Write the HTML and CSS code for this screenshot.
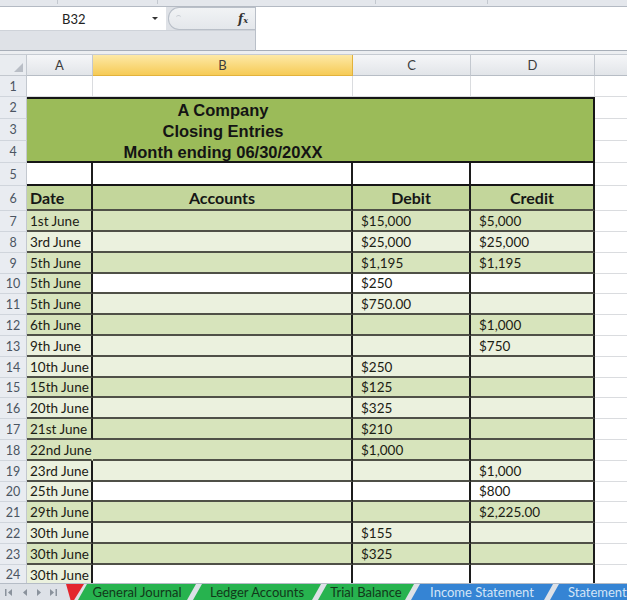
FILE: index.html
```html
<!DOCTYPE html>
<html>
<head>
<meta charset="utf-8">
<link rel="stylesheet" href="styles.css">
</head>
<body>
<div class="app">
  <div class="ribbon-edge">
    <span class="rs rs1"></span><span class="rs rs2"></span><span class="rs rs3"></span><span class="rs rs4"></span>
  </div>
  <div class="fbar">
    <div class="fbar-left">
      <div class="fbar-top">
        <div class="namebox"><span class="nb-text">B32</span><span class="nb-arrow"></span></div>
        <div class="fx-pill"><span class="fx-dot"></span><span class="fx">f<span class="fx-sub">x</span></span></div>
      </div>
      <div class="fbar-bottom"></div>
    </div>
    <div class="fbar-input"></div>
  </div>
  <div class="sep"></div>

  <div class="sheet">
    <div class="row colhdr">
      <div class="corner"><svg width="9" height="9" viewBox="0 0 9 9"><polygon points="9,0 9,9 0,9" fill="#b9bec6"/></svg></div>
      <div class="ch">A</div>
      <div class="ch sel">B</div>
      <div class="ch">C</div>
      <div class="ch">D</div>
      <div class="ch last"></div>
    </div>

    <div class="row r1">
      <div class="rh">1</div>
      <div class="c"></div><div class="c"></div><div class="c"></div><div class="c"></div><div class="c e"></div>
    </div>

    <div class="title-block">
      <div class="rh t1">2</div>
      <div class="rh t2">3</div>
      <div class="rh t3">4</div>
      <div class="tb tb-a"></div>
      <div class="tb tb-b">
        <div class="tline">A Company</div>
        <div class="tline">Closing Entries</div>
        <div class="tline">Month ending 06/30/20XX</div>
      </div>
      <div class="tb tb-cd"></div>
      <div class="c e e1"></div>
      <div class="c e e2"></div>
      <div class="c e e3"></div>
    </div>

    <div class="row r5">
      <div class="rh">5</div>
      <div class="c t"></div><div class="c t"></div><div class="c t"></div><div class="c t"></div><div class="c e"></div>
    </div>

    <div class="row r6">
      <div class="rh">6</div>
      <div class="c t h a">Date</div>
      <div class="c t h ctr">Accounts</div>
      <div class="c t h ctr">Debit</div>
      <div class="c t h ctr">Credit</div>
      <div class="c e"></div>
    </div>

    <div class="row rd"><div class="rh">7</div><div class="c t g a">1st June</div><div class="c t g"></div><div class="c t g n">$15,000</div><div class="c t g n">$5,000</div><div class="c e"></div></div>
    <div class="row rd"><div class="rh">8</div><div class="c t l a">3rd June</div><div class="c t l"></div><div class="c t l n">$25,000</div><div class="c t l n">$25,000</div><div class="c e"></div></div>
    <div class="row rd"><div class="rh">9</div><div class="c t g a">5th June</div><div class="c t g"></div><div class="c t g n">$1,195</div><div class="c t g n">$1,195</div><div class="c e"></div></div>
    <div class="row rd short"><div class="rh">10</div><div class="c t g a">5th June</div><div class="c t w"></div><div class="c t w n">$250</div><div class="c t w n"></div><div class="c e"></div></div>
    <div class="row rd"><div class="rh">11</div><div class="c t g a">5th June</div><div class="c t l"></div><div class="c t l n">$750.00</div><div class="c t l n"></div><div class="c e"></div></div>
    <div class="row rd"><div class="rh">12</div><div class="c t g a">6th June</div><div class="c t g"></div><div class="c t g n"></div><div class="c t g n">$1,000</div><div class="c e"></div></div>
    <div class="row rd"><div class="rh">13</div><div class="c t l a">9th June</div><div class="c t l"></div><div class="c t l n"></div><div class="c t l n">$750</div><div class="c e"></div></div>
    <div class="row rd"><div class="rh">14</div><div class="c t l a">10th June</div><div class="c t l"></div><div class="c t l n">$250</div><div class="c t l n"></div><div class="c e"></div></div>
    <div class="row rd short"><div class="rh">15</div><div class="c t g a">15th June</div><div class="c t g"></div><div class="c t g n">$125</div><div class="c t g n"></div><div class="c e"></div></div>
    <div class="row rd"><div class="rh">16</div><div class="c t l a">20th June</div><div class="c t l"></div><div class="c t l n">$325</div><div class="c t l n"></div><div class="c e"></div></div>
    <div class="row rd"><div class="rh">17</div><div class="c t g a">21st June</div><div class="c t g"></div><div class="c t g n">$210</div><div class="c t g n"></div><div class="c e"></div></div>
    <div class="row rd"><div class="rh">18</div><div class="c t g a open">22nd June</div><div class="c t g"></div><div class="c t g n">$1,000</div><div class="c t g n"></div><div class="c e"></div></div>
    <div class="row rd"><div class="rh">19</div><div class="c t l a">23rd June</div><div class="c t l"></div><div class="c t l n"></div><div class="c t l n">$1,000</div><div class="c e"></div></div>
    <div class="row rd short"><div class="rh">20</div><div class="c t l a">25th June</div><div class="c t w"></div><div class="c t w n"></div><div class="c t w n">$800</div><div class="c e"></div></div>
    <div class="row rd"><div class="rh">21</div><div class="c t g a">29th June</div><div class="c t g"></div><div class="c t g n"></div><div class="c t g n">$2,225.00</div><div class="c e"></div></div>
    <div class="row rd"><div class="rh">22</div><div class="c t l a">30th June</div><div class="c t l"></div><div class="c t l n">$155</div><div class="c t l n"></div><div class="c e"></div></div>
    <div class="row rd"><div class="rh">23</div><div class="c t g a">30th June</div><div class="c t g"></div><div class="c t g n">$325</div><div class="c t g n"></div><div class="c e"></div></div>
    <div class="row rd last-row"><div class="rh">24</div><div class="c t l a">30th June</div><div class="c t w"></div><div class="c t w n"></div><div class="c t w n"></div><div class="c e"></div></div>
  </div>

  <div class="tabs">
    <div class="nav">
      <svg width="60" height="17" viewBox="0 0 60 17">
        <rect x="5" y="5" width="1.5" height="7" fill="#8a929c"/>
        <polygon points="12,5 12,12 8,8.5" fill="#8a929c"/>
        <polygon points="27,5 27,12 23,8.5" fill="#8a929c"/>
        <polygon points="37,5 37,12 41,8.5" fill="#8a929c"/>
        <polygon points="50,5 50,12 54,8.5" fill="#8a929c"/>
        <rect x="55.5" y="5" width="1.5" height="7" fill="#8a929c"/>
      </svg>
    </div>
    <div class="tab red"></div>
    <div class="tab green t-gj">General Journal</div>
    <div class="tab green t-la">Ledger Accounts</div>
    <div class="tab green t-tb">Trial Balance</div>
    <div class="tab blue t-is">Income Statement</div>
    <div class="tab blue t-st">Statement</div>
  </div>
</div>
</body>
</html>
```

FILE: styles.css
```css
* { box-sizing: border-box; }
html, body { margin: 0; padding: 0; }
body {
  width: 627px;
  height: 600px;
  overflow: hidden;
  background: #ffffff;
  font-family: "Lato", "Liberation Sans", sans-serif;
  color: #222;
}
.app {
  display: flex;
  flex-direction: column;
  height: 600px;
}

/* ribbon edge */
.ribbon-edge {
  position: relative;
  height: 7px;
  background: #e4e7ec;
  border-bottom: 1px solid #b4bac3;
  flex: none;
}
.rs {
  position: absolute;
  top: 0;
  width: 1px;
  height: 4px;
  background: #c3c8cf;
}
.rs1 { left: 57px; }
.rs2 { left: 157px; }
.rs3 { left: 375px; }
.rs4 { left: 487px; }

/* formula bar */
.fbar {
  display: flex;
  height: 44px;
  flex: none;
}
.fbar-left {
  width: 255px;
  display: flex;
  flex-direction: column;
}
.fbar-top {
  display: flex;
  height: 23px;
  background: #dfe2e7;
}
.namebox {
  width: 166px;
  background: #fff;
  display: flex;
  align-items: center;
  position: relative;
}
.nb-text {
  font-family: "Lato", sans-serif;
  font-size: 13px;
  color: #222;
  margin-left: 62px;
}
.nb-arrow {
  position: absolute;
  left: 152px;
  top: 10px;
  width: 0;
  height: 0;
  border-left: 3px solid transparent;
  border-right: 3px solid transparent;
  border-top: 3px solid #333;
}
.fx-pill {
  flex: 1;
  margin-left: 2px;
  background: linear-gradient(#f1f3f5, #e4e7eb);
  border: 1px solid #b9bfc8;
  border-right: none;
  border-radius: 11px 0 0 11px;
  display: flex;
  align-items: center;
  justify-content: space-between;
  padding: 0 7px 0 7px;
}
.fx-dot {
  width: 5px;
  height: 3px;
  border-top: 1px solid #c9cdd3;
  border-radius: 3px 3px 0 0;
  margin-top: -4px;
}
.fx {
  font-family: "DejaVu Serif", "Liberation Serif", serif;
  font-style: italic;
  font-weight: bold;
  font-size: 12px;
  color: #333;
}
.fx-sub { font-size: 8px; }
.fbar-bottom {
  flex: 1;
  background: #dfe2e7;
  border-top: 1px solid #cfd3d9;
  border-bottom: 1px solid #a7aeb8;
}
.fbar-input {
  flex: 1;
  background: #fff;
  border-left: 1px solid #b9bfc8;
  border-bottom: 1px solid #a7aeb8;
}
.sep {
  height: 4px;
  flex: none;
  background: #eceef1;
  border-bottom: 1px solid #c6cbd2;
}

/* sheet */
.sheet {
  flex: 1;
  overflow: hidden;
}
.row {
  display: grid;
  grid-template-columns: 27px 66px 260px 118px 124px 32px;
}
.colhdr { height: 21px; }
.corner {
  background: #e9ecf0;
  border-right: 1px solid #c3c8cf;
  border-bottom: 1px solid #c3c8cf;
  display: flex;
  align-items: flex-end;
  justify-content: flex-end;
  padding: 0 3px 3px 0;
}
.ch {
  background: linear-gradient(#f5f6f8, #e2e5e9);
  border-right: 1px solid #c3c8cf;
  border-bottom: 1px solid #b7bdc5;
  font-size: 13px;
  color: #3d3d3d;
  display: flex;
  align-items: center;
  justify-content: center;
}
.ch.sel {
  background: linear-gradient(#fde9a6, #f6cb56);
  border-right: 1px solid #e2b23c;
  border-bottom: 1px solid #e2b23c;
}
.ch.last { border-right: none; }

.rh {
  background: #e9ecf1;
  border-right: 1px solid #c3c8cf;
  border-bottom: 1px solid #d0d5dc;
  font-size: 12.5px;
  color: #4b5562;
  display: flex;
  align-items: center;
  justify-content: center;
}

.c {
  border-right: 1px solid #dadcdf;
  border-bottom: 1px solid #dadcdf;
  font-size: 13.5px;
  display: flex;
  align-items: center;
  white-space: nowrap;
}
.c.e { border-right: none; }

.r1 { height: 21px; }
.r5 { height: 23px; }
.r6 { height: 25px; }
.rd { height: 21px; }
.rd.short { height: 20px; }
.last-row .c, .last-row .rh { align-items: flex-start; padding-top: 2px; }

/* title block */
.title-block {
  display: grid;
  grid-template-columns: 27px 66px 260px 242px 32px;
  grid-template-rows: 22px 22px 22px;
  height: 66px;
}
.t1 { grid-column: 1; grid-row: 1; }
.t2 { grid-column: 1; grid-row: 2; }
.t3 { grid-column: 1; grid-row: 3; }
.tb {
  grid-row: 1 / 4;
  background: #9bbb59;
  border-top: 2px solid #161616;
  border-bottom: 2px solid #161616;
}
.tb-a { grid-column: 2; }
.tb-b {
  grid-column: 3;
  display: flex;
  flex-direction: column;
  align-items: center;
  justify-content: center;
  font-family: "Liberation Sans", Arial, sans-serif;
  font-weight: bold;
  font-size: 16.5px;
  color: #141414;
}
.tline {
  height: 21px;
  line-height: 22px;
  white-space: nowrap;
}
.tb-cd {
  grid-column: 4;
  border-right: 2px solid #161616;
}
.e1 { grid-column: 5; grid-row: 1; }
.e2 { grid-column: 5; grid-row: 2; }
.e3 { grid-column: 5; grid-row: 3; }

/* table cells */
.c.t {
  border-right: 2px solid #1c1c1c;
  border-bottom: 2px solid #4f5047;
}
.r5 .c.t {
  border-bottom: 2px solid #161616;
  background: #fff;
}
.c.h {
  background: #c3d69b;
  font-weight: bold;
  font-size: 16px;
  color: #161616;
}
.ctr { justify-content: center; }
.c.a { padding-left: 3px; }
.c.n { padding-left: 8px; }
.c.open { border-right-color: transparent; overflow: visible; }
.g { background: #d7e4bc; }
.l { background: #ebf1de; }
.w { background: #ffffff; }
.rd .c.t { color: #1b2014; }

/* sheet tabs */
.tabs {
  height: 17px;
  flex: none;
  background: #dde1e7;
  border-top: 1px solid #b5bcc6;
  display: flex;
  align-items: stretch;
  overflow: hidden;
  white-space: nowrap;
}
.nav {
  width: 66px;
  flex: none;
}
.tab {
  flex: none;
  font-size: 13px;
  display: flex;
  align-items: center;
  justify-content: center;
  clip-path: polygon(9px 0, 100% 0, calc(100% - 9px) 100%, 0 100%);
}
.red {
  width: 18px;
  background: #e3262d;
  clip-path: polygon(0 0, 100% 0, 45% 100%, 25% 100%);
  margin-right: -6px;
}
.green {
  background: #27b34f;
  color: #12381a;
}
.blue {
  background: #3584d4;
  color: #d3e4f7;
}
.t-gj { width: 118px; margin-left: 0; }
.t-la { width: 128px; margin-left: -3px; }
.t-tb { width: 96px; margin-left: -3px; }
.t-is { width: 142px; margin-left: -3px; }
.t-st { width: 100px; margin-left: -3px; justify-content: flex-start; padding-left: 18px; }
```
